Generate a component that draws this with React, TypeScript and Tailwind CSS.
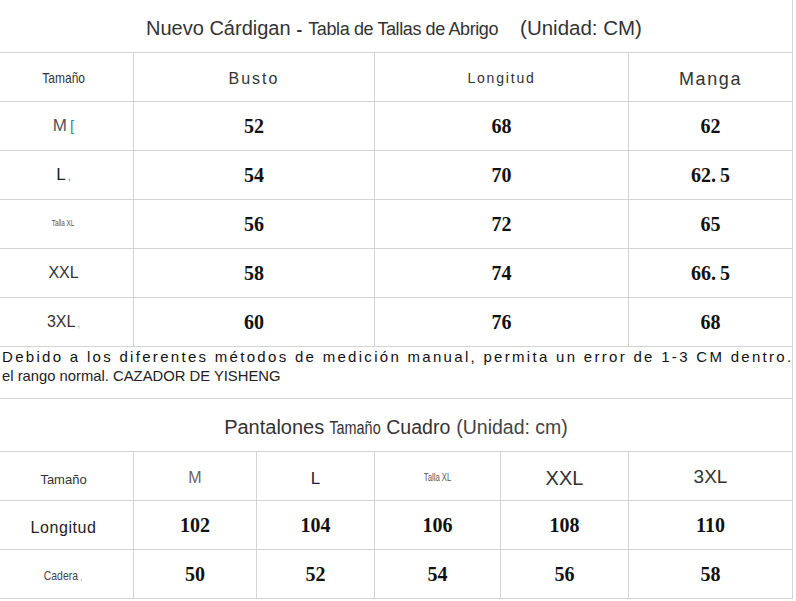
import type { ReactNode } from "react";

// Fuentes: sans tipo Arial y serif para los números
const SANS = "font-['Liberation_Sans',Arial,sans-serif]";
const SERIF = "font-['Liberation_Serif','Times_New_Roman',serif]";

const CELL =
  "flex h-[49px] items-center justify-center border-b border-r border-[#d3d3d3]";
// primera columna: el contenido va un poco corrido a la izquierda
const FIRST =
  "flex h-[49px] items-center justify-center border-b border-r border-[#d3d3d3] pr-[6px]";

// Número en negrita; el punto deja un hueco como en la imagen original
function Num({ value }: { value: string }) {
  const [a, b] = value.split(".");
  return (
    <span className={`${SERIF} text-[20px] font-bold text-[#111]`}>
      {a}
      {b !== undefined && (
        <>
          .<span className="ml-[4px]">{b}</span>
        </>
      )}
    </span>
  );
}

// Texto estrecho (las etiquetas pequeñas se ven comprimidas)
function Narrow({ children, className }: { children: ReactNode; className: string }) {
  return <span className={`inline-block ${className}`}>{children}</span>;
}

interface CoatRow {
  size: ReactNode;
  busto: string;
  longitud: string;
  manga: string;
}

const COAT_ROWS: CoatRow[] = [
  {
    size: (
      <span className="text-[17px] text-[#555]">
        M<span className="ml-[3px] text-[15px] text-[#3a8a8a]">[</span>
      </span>
    ),
    busto: "52",
    longitud: "68",
    manga: "62",
  },
  {
    size: (
      <span className="text-[17px] text-[#222]">
        L<span className="ml-[2px] text-[11px] text-[#777]">,</span>
      </span>
    ),
    busto: "54",
    longitud: "70",
    manga: "62.5",
  },
  {
    size: <Narrow className="scale-x-[0.7] text-[9px] text-[#555]">Talla XL</Narrow>,
    busto: "56",
    longitud: "72",
    manga: "65",
  },
  {
    size: <span className="text-[16px] text-[#333]">XXL</span>,
    busto: "58",
    longitud: "74",
    manga: "66.5",
  },
  {
    size: (
      <span className="text-[16px] text-[#333]">
        3XL<span className="ml-[2px] text-[10px] text-[#999]">,</span>
      </span>
    ),
    busto: "60",
    longitud: "76",
    manga: "68",
  },
];

const PANTS_SIZES = ["M", "L", "Talla XL", "XXL", "3XL"];
const PANTS_LONGITUD = ["102", "104", "106", "108", "110"];
const PANTS_CADERA = ["50", "52", "54", "56", "58"];

function CoatTable() {
  return (
    <>
      {/* Título */}
      <div className="flex h-[53px] items-center justify-center border-b border-r border-[#d3d3d3] text-[#333]">
        <span className="mr-[4px] mt-[4px] flex items-baseline">
          <span className="text-[20px]">Nuevo Cárdigan</span>
          <span className="mx-[6px] text-[17px] font-bold">-</span>
          <span className="text-[18px] tracking-[-0.4px]">Tabla de Tallas de Abrigo</span>
          <span className="ml-[22px] text-[20.5px]">(Unidad: CM)</span>
        </span>
      </div>

      <div className="grid grid-cols-[134px_241px_254px_164px]">
        <div className={FIRST}>
          <Narrow className="mt-[2px] scale-x-[0.8] text-[15px] text-[#333]">Tamaño</Narrow>
        </div>
        <div className={CELL}>
          <span className="mt-[3px] text-[16px] tracking-[2px] text-[#333]">Busto</span>
        </div>
        <div className={CELL}>
          <span className="mt-[3px] text-[14px] tracking-[1.8px] text-[#333]">Longitud</span>
        </div>
        <div className={CELL}>
          <span className="mt-[4px] text-[18px] tracking-[1.6px] text-[#333]">Manga</span>
        </div>

        {COAT_ROWS.map((row, idx) => (
          <div key={idx} className="contents">
            <div className={FIRST}>{row.size}</div>
            <div className={CELL}>
              <Num value={row.busto} />
            </div>
            <div className={CELL}>
              <Num value={row.longitud} />
            </div>
            <div className={CELL}>
              <Num value={row.manga} />
            </div>
          </div>
        ))}
      </div>

      {/* Nota */}
      <div className="flex h-[52px] flex-col border-b border-r border-[#d3d3d3] pl-[2px] pt-[1px] text-[#111]">
        <span className="whitespace-nowrap text-[15px] leading-[18px] tracking-[2.3px]">
          Debido a los diferentes métodos de medición manual, permita un error de 1-3 CM dentro.
        </span>
        <span className="mt-[1px] whitespace-nowrap text-[14.8px] leading-[18px] text-[#222]">
          el rango normal. CAZADOR DE YISHENG
        </span>
      </div>
    </>
  );
}

function PantsTable() {
  return (
    <>
      <div className="flex h-[53px] items-center justify-center border-b border-r border-[#d3d3d3] text-[#333]">
        <span className="mt-[5px] flex items-baseline">
          <span className="text-[20px]">Pantalones</span>
          <Narrow className="mx-[-1px] scale-x-[0.8] text-[18px]">Tamaño</Narrow>
          <span className="text-[19.5px]">Cuadro</span>
          <span className="ml-[6px] text-[19.5px] text-[#444]">(Unidad: cm)</span>
        </span>
      </div>

      <div className="grid grid-cols-[134px_123px_118px_126px_128px_164px]">
        <div className={FIRST}>
          <span className="mt-[8px] text-[13px] text-[#333]">Tamaño</span>
        </div>
        <div className={CELL}>
          <span className="mt-[3px] text-[16px] text-[#666]">{PANTS_SIZES[0]}</span>
        </div>
        <div className={CELL}>
          <span className="mt-[6px] text-[17px] text-[#1d1d44]">{PANTS_SIZES[1]}</span>
        </div>
        <div className={CELL}>
          <Narrow className="mt-[3px] scale-x-[0.7] text-[11px] text-[#555]">{PANTS_SIZES[2]}</Narrow>
        </div>
        <div className={CELL}>
          <span className="mt-[3px] text-[20px] text-[#333]">{PANTS_SIZES[3]}</span>
        </div>
        <div className={CELL}>
          <span className="mt-[3px] text-[19px] text-[#333]">{PANTS_SIZES[4]}</span>
        </div>

        <div className={FIRST}>
          <span className="mt-[6px] text-[16px] tracking-[0.6px] text-[#222]">Longitud</span>
        </div>
        {PANTS_LONGITUD.map((v) => (
          <div key={v} className={CELL}>
            <Num value={v} />
          </div>
        ))}

        <div className={FIRST}>
          <Narrow className="mt-[4px] scale-x-[0.8] text-[13px] text-[#444]">
            Cadera<span className="ml-[3px] text-[9px] text-[#888]">,</span>
          </Narrow>
        </div>
        {PANTS_CADERA.map((v) => (
          <div key={v} className={CELL}>
            <Num value={v} />
          </div>
        ))}
      </div>
    </>
  );
}

export default function App() {
  return (
    <div className={`${SANS} h-[601px] w-[796px] overflow-hidden bg-white`}>
      <div className="w-[793px]">
        <CoatTable />
        <PantsTable />
      </div>
    </div>
  );
}
